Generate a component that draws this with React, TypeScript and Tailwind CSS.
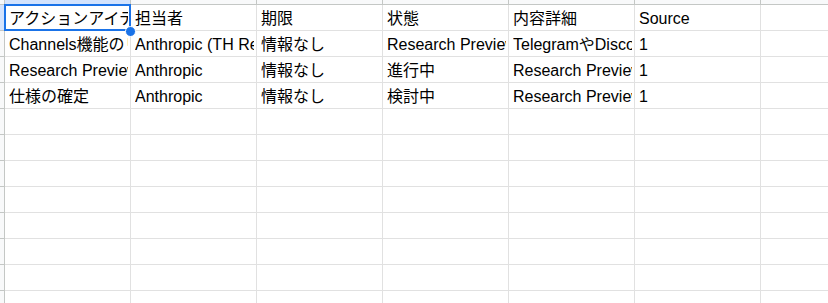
import React from "react";

const rows: string[][] = [
  ["アクションアイテム", "担当者", "期限", "状態", "内容詳細", "Source", ""],
  ["Channels機能のリリース", "Anthropic (TH Research)", "情報なし", "Research Preview", "TelegramやDiscordとの連携", "1", ""],
  ["Research Previewの提供", "Anthropic", "情報なし", "進行中", "Research Previewとして提供", "1", ""],
  ["仕様の確定", "Anthropic", "情報なし", "検討中", "Research Previewの仕様", "1", ""],
];

const TOTAL_ROWS = 12;
const COLS = 7;

export default function App() {
  const data: string[][] = [];
  for (let r = 0; r < TOTAL_ROWS; r++) {
    data.push(rows[r] ?? Array(COLS).fill(""));
  }
  return (
    <div
      className="relative w-[828px] h-[303px] overflow-hidden bg-white text-black"
      style={{ fontFamily: '"Liberation Sans", Arial, "Noto Sans CJK JP", sans-serif' }}
    >
      {/* column header strip */}
      <div className="flex h-[5px] border-b border-[#c4c7c5]">
        <div className="w-[5px] shrink-0 bg-[#f8f9fa] border-r border-[#c4c7c5]" />
        {Array.from({ length: COLS }).map((_, c) => (
          <div
            key={c}
            className={`w-[126px] shrink-0 border-r border-[#c4c7c5] ${c === 0 ? "bg-[#d3e3fd]" : "bg-[#f8f9fa]"}`}
          />
        ))}
      </div>
      {data.map((row, r) => (
        <div key={r} className="flex h-[26px]">
          <div
            className={`w-[5px] shrink-0 border-r border-b border-[#c4c7c5] ${r === 0 ? "bg-[#d3e3fd]" : "bg-[#f8f9fa]"}`}
          />
          {row.map((cell, c) => (
            <div
              key={c}
              className="w-[126px] shrink-0 border-r border-b border-[#e1e1e1] pl-[4px] pr-[2px] pt-[2px]"
            >
              <div className="overflow-hidden whitespace-nowrap text-[16px] leading-[23px]">{cell}</div>
            </div>
          ))}
        </div>
      ))}
      {/* selection overlay */}
      <div className="absolute left-[4px] top-[4px] w-[127px] h-[27px] border-2 border-[#1a73e8] pointer-events-none" />
      <div className="absolute left-[125px] top-[26px] w-[11px] h-[11px] rounded-full bg-[#1a73e8] border border-white pointer-events-none" />
    </div>
  );
}
